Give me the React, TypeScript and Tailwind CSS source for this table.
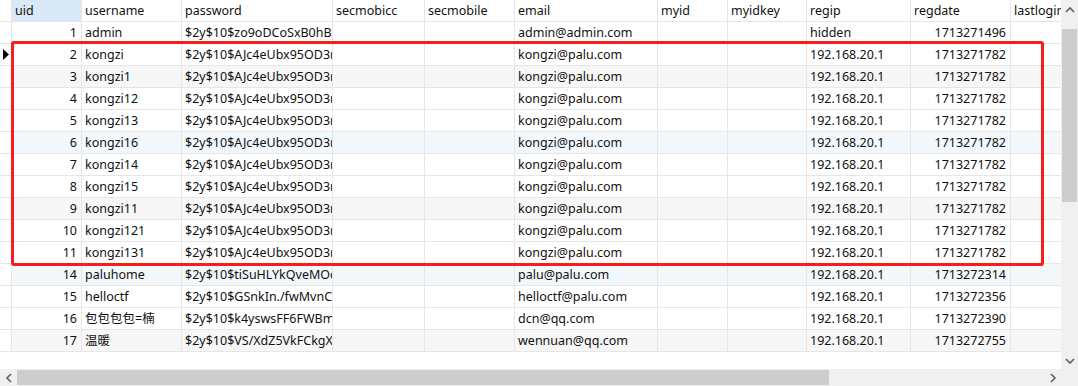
import React from "react";

type Row = {
  uid: number;
  username: string;
  password: string;
  email: string;
  regip: string;
  regdate: string;
};

const kz = "$2y$10$AJc4eUbx95OD3rQx7bLkWmZ1";

const rows: Row[] = [
  { uid: 1, username: "admin", password: "$2y$10$zo9oDCoSxB0hBuPq2Lr", email: "admin@admin.com", regip: "hidden", regdate: "1713271496" },
  { uid: 2, username: "kongzi", password: kz, email: "kongzi@palu.com", regip: "192.168.20.1", regdate: "1713271782" },
  { uid: 3, username: "kongzi1", password: kz, email: "kongzi@palu.com", regip: "192.168.20.1", regdate: "1713271782" },
  { uid: 4, username: "kongzi12", password: kz, email: "kongzi@palu.com", regip: "192.168.20.1", regdate: "1713271782" },
  { uid: 5, username: "kongzi13", password: kz, email: "kongzi@palu.com", regip: "192.168.20.1", regdate: "1713271782" },
  { uid: 6, username: "kongzi16", password: kz, email: "kongzi@palu.com", regip: "192.168.20.1", regdate: "1713271782" },
  { uid: 7, username: "kongzi14", password: kz, email: "kongzi@palu.com", regip: "192.168.20.1", regdate: "1713271782" },
  { uid: 8, username: "kongzi15", password: kz, email: "kongzi@palu.com", regip: "192.168.20.1", regdate: "1713271782" },
  { uid: 9, username: "kongzi11", password: kz, email: "kongzi@palu.com", regip: "192.168.20.1", regdate: "1713271782" },
  { uid: 10, username: "kongzi121", password: kz, email: "kongzi@palu.com", regip: "192.168.20.1", regdate: "1713271782" },
  { uid: 11, username: "kongzi131", password: kz, email: "kongzi@palu.com", regip: "192.168.20.1", regdate: "1713271782" },
  { uid: 14, username: "paluhome", password: "$2y$10$tiSuHLYkQveMOcRt5", email: "palu@palu.com", regip: "192.168.20.1", regdate: "1713272314" },
  { uid: 15, username: "helloctf", password: "$2y$10$GSnkIn./fwMvnCeUu8", email: "helloctf@palu.com", regip: "192.168.20.1", regdate: "1713272356" },
  { uid: 16, username: "包包包包=楠", password: "$2y$10$k4yswsFF6FWBmxQ2", email: "dcn@qq.com", regip: "192.168.20.1", regdate: "1713272390" },
  { uid: 17, username: "温暖", password: "$2y$10$VS/XdZ5VkFCkgXr4", email: "wennuan@qq.com", regip: "192.168.20.1", regdate: "1713272755" },
];

// row tint repeats every third row, alternating grey / blue
const rowBg = (i: number) => {
  if (i % 3 !== 2) return "bg-white";
  return (i / 3) % 2 < 1 ? "bg-[#f7f7f7]" : "bg-[#f3f8fd]";
};

const cell = "shrink-0 overflow-hidden whitespace-nowrap border-r border-[#e6e6e6] px-[3px]";

const Chevron = ({ d }: { d: string }) => (
  <svg width="10" height="10" viewBox="0 0 10 10" className="text-[#606060]">
    <path d={d} fill="none" stroke="currentColor" strokeWidth="1.6" />
  </svg>
);

const App = () => {
  return (
    <div
      className="relative h-[386px] w-[1078px] overflow-hidden bg-[#f0f0f0] text-[12.5px] text-[#111]"
      style={{ fontFamily: '"Noto Sans", "Noto Sans CJK SC", sans-serif' }}
    >
      <div className="flex h-[369px]">
        {/* GRID */}
        <div className="h-full w-[1061px] overflow-hidden bg-white">
          {/* HEADER */}
          <div className="flex h-[22px] items-center border-b border-[#e6e6e6] leading-[21px]">
            <div className="h-full w-[12px] shrink-0 border-r border-[#e6e6e6]" />
            <div className={`${cell} h-full w-[70px] bg-[#d9e9f8]`}>uid</div>
            <div className={`${cell} h-full w-[100px]`}>username</div>
            <div className={`${cell} h-full w-[151px]`}>password</div>
            <div className={`${cell} h-full w-[92px]`}>secmobicc</div>
            <div className={`${cell} h-full w-[90px]`}>secmobile</div>
            <div className={`${cell} h-full w-[143px]`}>email</div>
            <div className={`${cell} h-full w-[70px]`}>myid</div>
            <div className={`${cell} h-full w-[79px]`}>myidkey</div>
            <div className={`${cell} h-full w-[104px]`}>regip</div>
            <div className={`${cell} h-full w-[100px]`}>regdate</div>
            <div className={`${cell} h-full w-[60px]`}>lastlogin</div>
          </div>

          {/* ROWS */}
          {rows.map((r, i) => (
            <div key={r.uid} className={`flex h-[22px] border-b border-[#e6e6e6] leading-[21px] ${rowBg(i)}`}>
              <div className="flex h-full w-[12px] shrink-0 items-center border-r border-[#e6e6e6] bg-white">
                {r.uid === 2 && (
                  <svg width="6" height="11" viewBox="0 0 6 11" className="ml-[3px]">
                    <path d="M0 0 L6 5.5 L0 11 Z" fill="#000" />
                  </svg>
                )}
              </div>
              <div className={`${cell} w-[70px] pr-[4px] text-right`}>{r.uid}</div>
              <div className={`${cell} w-[100px]`}>{r.username}</div>
              <div className={`${cell} w-[151px]`}>{r.password}</div>
              <div className={`${cell} w-[92px]`} />
              <div className={`${cell} w-[90px]`} />
              <div className={`${cell} w-[143px]`}>{r.email}</div>
              <div className={`${cell} w-[70px]`} />
              <div className={`${cell} w-[79px]`} />
              <div className={`${cell} w-[104px]`}>{r.regip}</div>
              <div className={`${cell} w-[100px] pr-[4px] text-right`}>{r.regdate}</div>
              <div className={`${cell} w-[60px]`} />
            </div>
          ))}
        </div>

        {/* VERTICAL SCROLLBAR */}
        <div className="flex h-full w-[17px] flex-col items-center">
          <div className="flex h-[20px] items-center">
            <Chevron d="M1 7 L5 3 L9 7" />
          </div>
          <div className="mt-[9px] h-[173px] w-[15px] bg-[#cdcdcd]" />
          <div className="flex-1" />
          <div className="flex h-[17px] items-center">
            <Chevron d="M1 3 L5 7 L9 3" />
          </div>
        </div>
      </div>

      {/* HORIZONTAL SCROLLBAR */}
      <div className="flex h-[17px] items-center">
        <div className="flex w-[17px] justify-center">
          <Chevron d="M7 1 L3 5 L7 9" />
        </div>
        <div className="h-[15px] w-[812px] bg-[#cdcdcd]" />
        <div className="flex-1" />
        <div className="mr-[20px] flex w-[10px] justify-center">
          <Chevron d="M3 1 L7 5 L3 9" />
        </div>
      </div>

      {/* red highlight box */}
      <div className="pointer-events-none absolute left-[11px] top-[41px] h-[225px] w-[1033px] rounded-[3px] border-[3px] border-[#f81d1d]" />
    </div>
  );
};

export default App;
